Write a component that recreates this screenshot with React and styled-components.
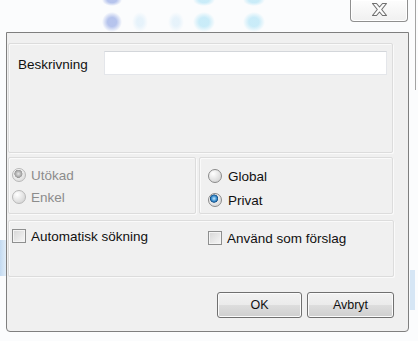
import React from 'react';
import styled, { createGlobalStyle } from 'styled-components';

const GlobalStyle = createGlobalStyle`
	html, body {
		margin: 0;
		padding: 0;
	}
	body {
		background: #fbfcfd;
		font-family: "Liberation Sans", Arial, sans-serif;
	}
`;

const Screen = styled.div`
	width: 418px;
	height: 341px;
	overflow: hidden;
	background:
		radial-gradient(10px 10px at 112px 22px, rgba(170, 186, 234, 0.85) 45%, rgba(170, 186, 234, 0) 100%),
		radial-gradient(10px 6px at 112px 0px, rgba(170, 186, 234, 0.85) 45%, rgba(170, 186, 234, 0) 100%),
		radial-gradient(11px 10px at 204px 22px, rgba(196, 234, 248, 0.9) 45%, rgba(196, 234, 248, 0) 100%),
		radial-gradient(11px 6px at 204px 0px, rgba(196, 234, 248, 0.9) 45%, rgba(196, 234, 248, 0) 100%),
		radial-gradient(11px 10px at 254px 22px, rgba(196, 234, 248, 0.9) 45%, rgba(196, 234, 248, 0) 100%),
		radial-gradient(11px 6px at 254px 0px, rgba(196, 234, 248, 0.9) 45%, rgba(196, 234, 248, 0) 100%),
		radial-gradient(8px 10px at 140px 22px, rgba(225, 240, 250, 0.8) 40%, rgba(225, 240, 250, 0) 100%),
		radial-gradient(8px 10px at 176px 22px, rgba(225, 240, 250, 0.8) 40%, rgba(225, 240, 250, 0) 100%),
		linear-gradient(90deg, #c3daf1, #e1edf8) 0 240px / 6px 36px no-repeat,
		linear-gradient(#a3a3a3, #a3a3a3) 415px 0 / 1px 90px no-repeat,
		linear-gradient(#d6e6f5, #d6e6f5) 410px 270px / 5px 40px no-repeat,
		#fbfcfd;
`;

const TitleBar = styled.div`
	height: 32px;
	display: flex;
	justify-content: flex-end;
	align-items: flex-start;
	padding-right: 10px;
	box-sizing: border-box;
`;

const CloseButton = styled.div`
	width: 58px;
	height: 22px;
	box-sizing: border-box;
	border: 1px solid #8f8f8f;
	border-top: none;
	border-radius: 0 0 4px 4px;
	background: linear-gradient(#fdfdfd, #f0f0f0);
	box-shadow: inset 0 0 0 1px #ffffff;
	display: flex;
	align-items: center;
	justify-content: center;
	padding-bottom: 2px;
`;

const Dialog = styled.div`
	margin-left: 6px;
	width: 403px;
	height: 300px;
	box-sizing: border-box;
	border: 1px solid #7f7f7f;
	border-radius: 0 0 4px 4px;
	background: #f0f0f0;
	padding: 10px 14px 0 1px;
	display: flex;
	flex-direction: column;
`;

const Group = styled.div`
	width: ${p => p.width}px;
	height: ${p => p.height}px;
	box-sizing: border-box;
	border: 1px solid #dcdcdc;
	border-radius: 2px;
	box-shadow: inset 1px 1px 0 #fafafa, 1px 1px 0 #fafafa;
	padding: ${p => p.pad};
`;

const GroupRow = styled.div`
	display: flex;
	gap: 3px;
	margin-top: ${p => p.top}px;
`;

const FieldRow = styled.div`
	display: flex;
	align-items: center;
`;

const Label = styled.div`
	flex: 1;
	font-size: 13.5px;
	color: #111;
	padding-top: 3px;
`;

const TextInput = styled.div`
	width: 283px;
	height: 24px;
	box-sizing: border-box;
	background: #fff;
	border: 1px solid #e4e6ea;
	border-top-color: #d3d6da;
`;

const Option = styled.label`
	display: flex;
	align-items: center;
	gap: ${p => p.gap || 5}px;
	height: ${p => p.h || 22}px;
	margin-top: ${p => p.offset || 0}px;
	font-size: 13.5px;
	color: ${p => (p.disabled ? '#8c8c8c' : '#111')};
`;

const Radio = styled.span`
	width: 14px;
	height: 14px;
	box-sizing: border-box;
	border-radius: 50%;
	border: 1px solid ${p => (p.disabled ? '#b8b8b8' : '#8a8a8a')};
	flex: none;
	background: ${p =>
		p.checked
			? p.disabled
				? 'radial-gradient(circle at 45% 40%, #e6e6e6 0, #a9a9a9 3px, #9a9a9a 3.8px, rgba(0,0,0,0) 4.3px), radial-gradient(circle at 35% 30%, #fff, #d6d6d6)'
				: 'radial-gradient(circle at 42% 38%, #c4e8ff 0, #2f86c8 2.8px, #114a82 3.8px, rgba(0,0,0,0) 4.4px), radial-gradient(circle at 35% 30%, #fff, #d0d0d0)'
			: 'radial-gradient(circle at 35% 30%, #ffffff, #d6d6d6 80%)'};
`;

const Checkbox = styled.span`
	width: 14px;
	height: 14px;
	box-sizing: border-box;
	border: 1px solid #8e8f8f;
	flex: none;
	background: linear-gradient(135deg, #d6d6d6, #f7f7f7);
	box-shadow: inset 0 0 0 1px #f4f4f4;
`;

const CheckGrid = styled.div`
	display: grid;
	grid-template-columns: 196px 1fr;
	align-items: start;
`;

const ButtonRow = styled.div`
	display: flex;
	justify-content: flex-end;
	gap: 5px;
	margin-top: 15px;
`;

const Button = styled.button`
	width: ${p => p.width}px;
	height: 26px;
	box-sizing: border-box;
	border: 1px solid #707070;
	border-radius: 3px;
	background: linear-gradient(#f2f2f2 0%, #ebebeb 48%, #dddddd 52%, #cfcfcf 100%);
	box-shadow: inset 0 0 0 1px #fbfbfb;
	font-family: "Liberation Sans", Arial, sans-serif;
	font-size: 12.5px;
	color: #111;
	padding: 0;
`;

const CloseGlyph = () => (
	<svg width="17" height="15" viewBox="0 0 17 15">
		<polygon
			points="1.5,1.5 5.5,1.5 8.5,5 11.5,1.5 15.5,1.5 10.7,7.5 15.5,13.5 11.5,13.5 8.5,10 5.5,13.5 1.5,13.5 6.3,7.5"
			fill="#fbfbfb"
			stroke="#6f6f6f"
			strokeWidth="1.1"
			strokeLinejoin="round"
		/>
	</svg>
);

export default function App() {
	return (
		<Screen>
			<GlobalStyle />
			<TitleBar>
				<CloseButton>
					<CloseGlyph />
				</CloseButton>
			</TitleBar>
			<Dialog>
				<Group width={385} height={110} pad="7px 5px 0 9px">
					<FieldRow>
						<Label>Beskrivning</Label>
						<TextInput />
					</FieldRow>
				</Group>
				<GroupRow top={4}>
					<Group width={188} height={57} pad="6px 0 0 3px">
						<Option disabled>
							<Radio checked disabled />
							Utökad
						</Option>
						<Option disabled>
							<Radio disabled />
							Enkel
						</Option>
					</Group>
					<Group width={194} height={57} pad="6px 0 0 8px">
						<Option h={24} gap={6}>
							<Radio />
							Global
						</Option>
						<Option h={24} gap={6}>
							<Radio checked />
							Privat
						</Option>
					</Group>
				</GroupRow>
				<GroupRow top={6}>
					<Group width={386} height={57} pad="4px 0 0 3px">
						<CheckGrid>
							<Option gap={5}>
								<Checkbox />
								Automatisk sökning
							</Option>
							<Option gap={5} offset={2}>
								<Checkbox />
								Använd som förslag
							</Option>
						</CheckGrid>
					</Group>
				</GroupRow>
				<ButtonRow>
					<Button width={85}>OK</Button>
					<Button width={87}>Avbryt</Button>
				</ButtonRow>
			</Dialog>
		</Screen>
	);
}
